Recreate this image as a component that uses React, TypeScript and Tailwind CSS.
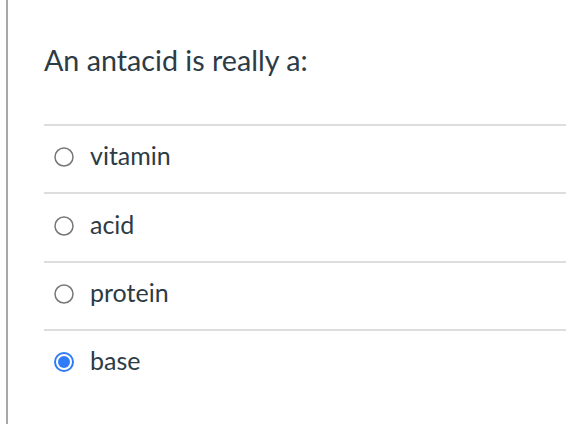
import React from "react";

const options = [
  { label: "vitamin", checked: false, h: "h-[68px]" },
  { label: "acid", checked: false, h: "h-[69px]" },
  { label: "protein", checked: false, h: "h-[68px]" },
  { label: "base", checked: true, h: "h-[68px]" },
];

function Radio({ checked }: { checked: boolean }) {
  return (
    <svg width="20" height="20" viewBox="0 0 20 20" className="shrink-0 mb-[4px]">
      {checked ? (
        <>
          <circle cx="10" cy="10" r="9" fill="#ffffff" stroke="#2f7cf6" strokeWidth="2" />
          <circle cx="10" cy="10" r="6" fill="#2f7cf6" />
        </>
      ) : (
        <circle cx="10" cy="10" r="9" fill="#ffffff" stroke="#767676" strokeWidth="1.5" />
      )}
    </svg>
  );
}

export default function App() {
  return (
    <div
      className="w-[566px] h-[424px] bg-white overflow-hidden"
      style={{ fontFamily: "Lato, 'Noto Sans', sans-serif" }}
    >
      <div className="ml-[6px] h-full border-l-2 border-[#a8a8a8] pl-[36px]">
        <h1 className="pt-[42px] text-[28.7px] leading-[36px] text-[#2d3b45] font-normal">
          An antacid is really a:
        </h1>
        <div className="mt-[46px]">
          {options.map((o) => (
            <div
              key={o.label}
              className={`${o.h} border-t-2 border-[#dddddd] flex items-center gap-[16px] pl-[10px]`}
            >
              <Radio checked={o.checked} />
              <span className="text-[25px] leading-[30px] mb-[8px] text-[#2d3b45]">{o.label}</span>
            </div>
          ))}
        </div>
      </div>
    </div>
  );
}
